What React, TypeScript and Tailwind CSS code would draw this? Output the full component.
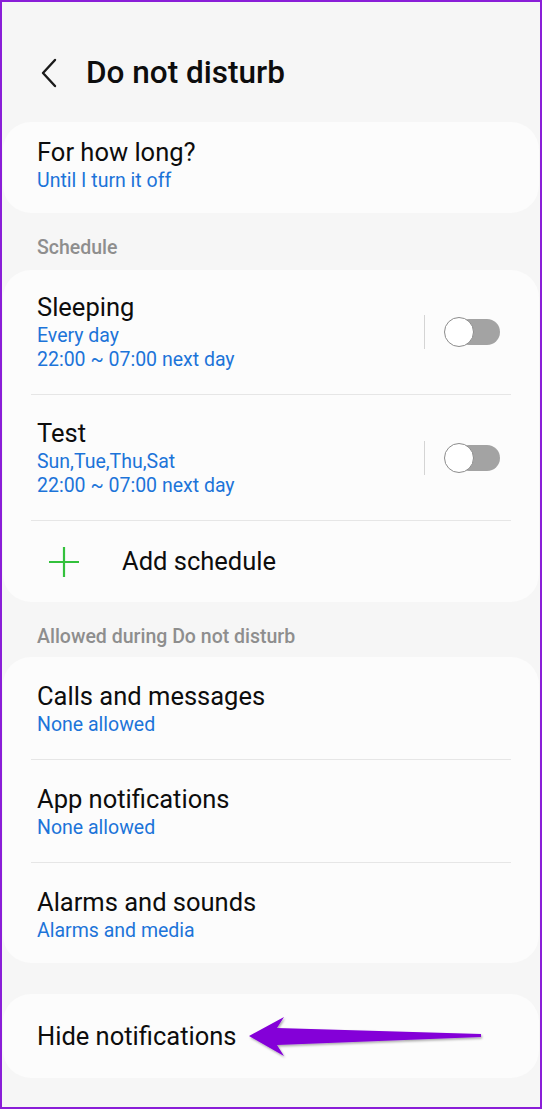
import React from "react";

const font = { fontFamily: "Roboto, 'Noto Sans', sans-serif" };

function Toggle() {
  return (
    <div className="flex items-center">
      <div className="h-[34px] w-px bg-[#d4d4d4]" />
      <div className="relative ml-[19px] h-[30px] w-[56px]">
        <div className="absolute right-0 top-[2px] h-[26px] w-[44px] rounded-full bg-[#a3a3a3]" />
        <div className="absolute left-0 top-0 h-[30px] w-[30px] rounded-full border-[1.5px] border-[#8c8c8c] bg-white" />
      </div>
    </div>
  );
}

function Divider() {
  return <div className="mx-[28px] h-px bg-[#e6e6e6]" />;
}

function Row({
  title,
  subs,
  pt,
  pb,
  toggle,
}: {
  title: string;
  subs: string[];
  pt: string;
  pb: string;
  toggle?: boolean;
}) {
  return (
    <div className={`flex items-center justify-between pl-[34px] pr-[39px] ${pt} ${pb}`}>
      <div className="flex flex-col">
        <span className="text-[25.5px] leading-[30px] text-[#0d0d0d]">{title}</span>
        <div className="mt-[2px] flex flex-col">
          {subs.map((s) => (
            <span key={s} className="text-[19.5px] leading-[24px] text-[#1c74d9]">
              {s}
            </span>
          ))}
        </div>
      </div>
      {toggle && <Toggle />}
    </div>
  );
}

function SectionLabel({ children, h }: { children: React.ReactNode; h: string }) {
  return (
    <div className={`flex items-center pl-[35px] ${h}`}>
      <span className="text-[19.5px] font-medium leading-none text-[#8e8e8e]">{children}</span>
    </div>
  );
}

export default function App() {
  return (
    <div
      style={font}
      className="box-border flex h-[1109px] w-[542px] flex-col overflow-hidden border-2 border-[#8a1ed8] bg-[#f6f6f6]"
    >
      <header className="flex h-[120px] items-center pt-[22px] pl-[37px]">
        <svg width="20" height="30" viewBox="0 0 20 30" fill="none">
          <path d="M16 2 L4 15 L16 28" stroke="#1a1a1a" strokeWidth="2.4" strokeLinecap="round" strokeLinejoin="round" />
        </svg>
        <h1 className="ml-[27px] text-[31.5px] font-medium leading-none text-[#0d0d0d]">Do not disturb</h1>
      </header>

      <section className="mx-px rounded-[28px] bg-[#fcfcfc]">
        <Row title="For how long?" subs={["Until I turn it off"]} pt="pt-[15px]" pb="pb-[20px]" />
      </section>

      <SectionLabel h="h-[57px] pt-[13px]">Schedule</SectionLabel>

      <section className="mx-px rounded-[28px] bg-[#fcfcfc]">
        <Row title="Sleeping" subs={["Every day", "22:00 ~ 07:00 next day"]} pt="pt-[22px]" pb="pb-[22px]" toggle />
        <Divider />
        <Row title="Test" subs={["Sun,Tue,Thu,Sat", "22:00 ~ 07:00 next day"]} pt="pt-[23px]" pb="pb-[22px]" toggle />
        <Divider />
        <div className="flex h-[81px] items-center pl-[45px]">
          <svg width="32" height="32" viewBox="0 0 32 32">
            <path d="M16 1 V31 M1 16 H31" stroke="#33c13c" strokeWidth="2.2" />
          </svg>
          <span className="ml-[42px] text-[25.5px] text-[#0d0d0d]">Add schedule</span>
        </div>
      </section>

      <SectionLabel h="h-[55px] pt-[15px]">Allowed during Do not disturb</SectionLabel>

      <section className="mx-px rounded-[28px] bg-[#fcfcfc]">
        <Row title="Calls and messages" subs={["None allowed"]} pt="pt-[24px]" pb="pb-[22px]" />
        <Divider />
        <Row title="App notifications" subs={["None allowed"]} pt="pt-[24px]" pb="pb-[22px]" />
        <Divider />
        <Row title="Alarms and sounds" subs={["Alarms and media"]} pt="pt-[24px]" pb="pb-[20px]" />
      </section>

      <div className="h-[31px]" />

      <section className="relative mx-px flex h-[84px] items-center rounded-[28px] bg-[#fcfcfc] pl-[34px]">
        <span className="text-[25.5px] text-[#0d0d0d]">Hide notifications</span>
        <svg className="absolute left-[240px] top-[23px]" width="245" height="46" viewBox="0 0 245 46">
          <defs>
            <filter id="sh" x="-5%" y="-20%" width="110%" height="150%">
              <feDropShadow dx="1" dy="1.5" stdDeviation="1" floodColor="#000" floodOpacity="0.35" />
            </filter>
          </defs>
          <polygon
            points="6,19 41,0 34,11 238,17 238,20 34,28 41,39"
            fill="#8400d8"
            filter="url(#sh)"
          />
        </svg>
      </section>
    </div>
  );
}
